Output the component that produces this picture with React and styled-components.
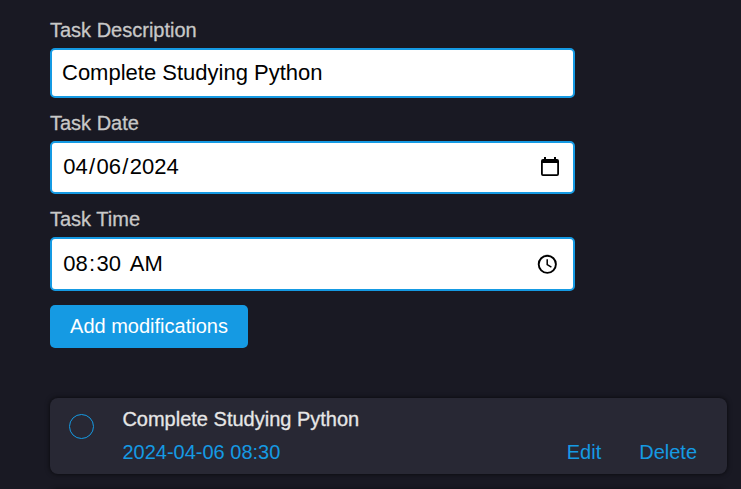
import React from "react";
import styled, { createGlobalStyle } from "styled-components";

const GlobalStyle = createGlobalStyle`
  * { box-sizing: border-box; }
  body {
    margin: 0;
    height: 489px;
    overflow: hidden;
    background: #191923;
    font-family: "Liberation Sans", Arial, sans-serif;
    font-size: 20px;
  }
`;

const Page = styled.main`
  height: 489px;
  overflow: hidden;
  padding: 18px 14px 0 50px;
`;

const Form = styled.form`
  display: flex;
  flex-direction: column;
  align-items: flex-start;
  width: 525px;
`;

const Label = styled.label`
  height: ${(p) => p.$height}px;
  padding-top: ${(p) => p.$top ?? 1}px;
  line-height: 23px;
  color: #c8c8c8;
  -webkit-text-stroke: 0.3px #c8c8c8;
`;

const Field = styled.div`
  display: flex;
  align-items: center;
  justify-content: space-between;
  width: 100%;
  height: ${(p) => p.$height}px;
  margin-bottom: ${(p) => p.$gap}px;
  padding: 0 ${(p) => p.$right || 10}px ${(p) => p.$bottom ?? 1}px 10px;
  border: 2px solid #159ae3;
  border-radius: 5px;
  background: #fff;
  color: #000;
  font-size: 22px;
  line-height: 25px;
`;

const Segments = styled.span`
  display: flex;
  white-space: pre;
`;

const Segment = styled.span`
  padding: 0 1.3px;
`;

const SubmitButton = styled.button`
  height: 43px;
  width: 198px;
  padding: 0;
  border: 0;
  border-radius: 5px;
  background: #159ae3;
  color: #fff;
  font: 20px "Liberation Sans", Arial, sans-serif;
`;

const TaskList = styled.section`
  display: flex;
  flex-direction: column;
  gap: 16px;
  margin-top: 50px;
`;

const TaskCard = styled.article`
  display: flex;
  height: 76px;
  flex-shrink: 0;
  padding: 10px 30px 0 19px;
  border-radius: 8px;
  background: #282834;
  box-shadow: 0 0 5px rgba(0, 0, 0, 0.7);
`;

const Check = styled.span`
  width: 25px;
  height: 25px;
  margin: 6px 28.4px 0 0;
  border: 1px solid #159ae3;
  border-radius: 50%;
`;

const TaskBody = styled.div`
  flex: 1;
  line-height: 23px;
`;

const TaskTitle = styled.div`
  color: #e6e6e6;
  -webkit-text-stroke: 0.3px #e6e6e6;
`;

const TaskMeta = styled.div`
  display: flex;
  justify-content: space-between;
  margin-top: 10px;
  color: #159ae3;
`;

const Actions = styled.div`
  display: flex;
  gap: 38px;
`;

const CalendarIcon = () => (
  <svg width="20" height="22" viewBox="0 0 20 22">
    <path fill="#000" fillRule="evenodd" d="M4 1h2v2h8V1h2v2h1a2 2 0 0 1 2 2v13a2 2 0 0 1-2 2H3a2 2 0 0 1-2-2V5a2 2 0 0 1 2-2h1zM2.8 7v11.2h14.4V7z" />
  </svg>
);

const ClockIcon = () => (
  <svg width="22" height="22" viewBox="0 0 22 22" fill="none" stroke="#000">
    <circle cx="11.3" cy="11.3" r="8.6" strokeWidth="1.9" />
    <path d="M11.2 6.3v5.3l4.2 2.5" strokeWidth="1.5" />
  </svg>
);

const SegmentedValue = ({ parts }) => (
  <Segments>
    {parts.map((part, i) =>
      /\w/.test(part) ? <Segment key={i}>{part}</Segment> : <span key={i}>{part}</span>
    )}
  </Segments>
);

export default function App() {
  return (
    <>
      <GlobalStyle />
      <Page>
        <Form>
          <Label $height={30}>Task Description</Label>
          <Field $height={50} $gap={13} $bottom={2}>Complete Studying Python</Field>
          <Label $height={30}>Task Date</Label>
          <Field $height={53} $gap={14} $right={13} $bottom={2}>
            <SegmentedValue parts={["04", "/", "06", "/", "2024"]} />
            <CalendarIcon />
          </Field>
          <Label $height={29} $top={0}>Task Time</Label>
          <Field $height={54} $gap={14} $right={15}>
            <SegmentedValue parts={["08", ":", "30", " ", "AM"]} />
            <ClockIcon />
          </Field>
          <SubmitButton type="button">Add modifications</SubmitButton>
        </Form>
        <TaskList>
          <TaskCard>
            <Check />
            <TaskBody>
              <TaskTitle>Complete Studying Python</TaskTitle>
              <TaskMeta>
                <span>2024-04-06 08:30</span>
                <Actions>
                  <span>Edit</span>
                  <span>Delete</span>
                </Actions>
              </TaskMeta>
            </TaskBody>
          </TaskCard>
          <TaskCard />
        </TaskList>
      </Page>
    </>
  );
}
